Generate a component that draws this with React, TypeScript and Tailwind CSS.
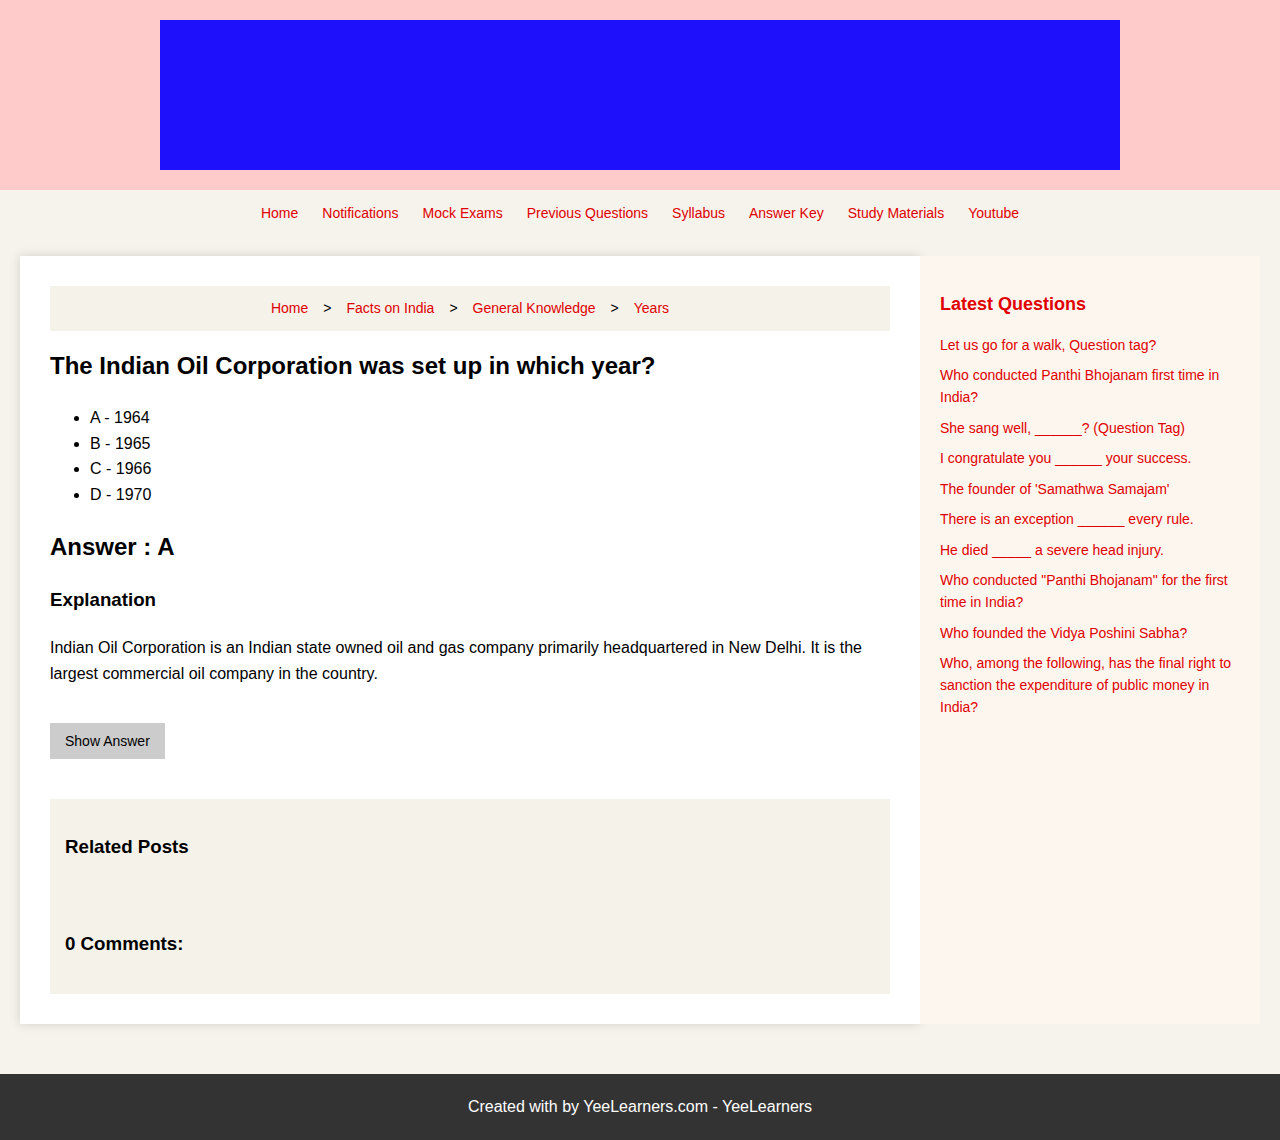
import React from 'react';

const navLinks = [
  'Home',
  'Notifications',
  'Mock Exams',
  'Previous Questions',
  'Syllabus',
  'Answer Key',
  'Study Materials',
  'Youtube',
];

const crumbs = ['Home', 'Facts on India', 'General Knowledge', 'Years'];

const options = ['A - 1964', 'B - 1965', 'C - 1966', 'D - 1970'];

const latest = [
  'Let us go for a walk, Question tag?',
  'Who conducted Panthi Bhojanam first time in India?',
  'She sang well, ______? (Question Tag)',
  'I congratulate you ______ your success.',
  "The founder of 'Samathwa Samajam'",
  'There is an exception ______ every rule.',
  'He died _____ a severe head injury.',
  'Who conducted "Panthi Bhojanam" for the first time in India?',
  'Who founded the Vidya Poshini Sabha?',
  'Who, among the following, has the final right to sanction the expenditure of public money in India?',
];

const App: React.FC = () => {
  return (
    <div className="min-h-[1140px] bg-[#f6f3ec] font-['Liberation_Sans',Arial,sans-serif] text-black flex flex-col">
      {/* header banner */}
      <header className="bg-[#ffcbca] h-[190px] flex justify-center pt-5">
        <div className="w-[960px] h-[150px] bg-[#1f10fb]" />
      </header>

      <nav className="h-[46px] bg-[#f6f3ec] flex items-center justify-center gap-6 text-[14px] text-[#e00000]">
        {navLinks.map((l) => (
          <a key={l} href="#" className="leading-none">
            {l}
          </a>
        ))}
      </nav>

      <main className="flex px-5 pt-5 pb-[50px]">
        <article className="w-[900px] bg-white p-[30px] shadow-[0_0_10px_rgba(0,0,0,0.15)]">
          <div className="h-[45px] bg-[#f5f2ea] flex items-center justify-center text-[14px]">
            {crumbs.map((c, i) => (
              <React.Fragment key={c}>
                {i > 0 && <span className="mx-[15px] text-[14px] text-black">&gt;</span>}
                <a href="#" className="text-[#e00000]">
                  {c}
                </a>
              </React.Fragment>
            ))}
          </div>

          <h2 className="mt-[19.5px] text-[24px] leading-[29px] font-bold">
            The Indian Oil Corporation was set up in which year?
          </h2>

          <ul className="mt-[25.5px] list-disc pl-10 text-[16px] leading-[25.5px]">
            {options.map((o) => (
              <li key={o}>{o}</li>
            ))}
          </ul>

          <h2 className="mt-[25px] text-[24px] leading-[29px] font-bold">Answer : A</h2>

          <h3 className="mt-[28px] text-[18.72px] leading-[22px] font-bold">Explanation</h3>

          <p className="mt-[24px] text-[16px] leading-[26px]">
            Indian Oil Corporation is an Indian state owned oil and gas company primarily headquartered in New
            Delhi. It is the largest commercial oil company in the country.
          </p>

          <button className="mt-[36px] h-9 px-[15px] bg-[#cccccc] text-[14px] text-black">Show Answer</button>

          <section className="mt-10 bg-[#f5f2ea] px-[15px] pt-[37px] pb-[39px]">
            <h3 className="text-[18.72px] leading-[22px] font-bold">Related Posts</h3>
            <h3 className="mt-[75px] text-[18.72px] leading-[22px] font-bold">0 Comments:</h3>
          </section>
        </article>

        <aside className="w-[340px] bg-[#fdf6ef] p-5">
          <h3 className="mt-[17.5px] text-[18px] leading-[21px] font-bold text-[#e00000]">Latest Questions</h3>
          <ul className="mt-[19px] flex flex-col gap-[8.5px] text-[14px] leading-[22px] text-[#e00000]">
            {latest.map((q) => (
              <li key={q}>
                <a href="#">{q}</a>
              </li>
            ))}
          </ul>
        </aside>
      </main>

      <footer className="mt-auto h-[66px] bg-[#333333] flex items-center justify-center text-white text-[16px]">
        Created with by YeeLearners.com - YeeLearners
      </footer>
    </div>
  );
};

export default App;
